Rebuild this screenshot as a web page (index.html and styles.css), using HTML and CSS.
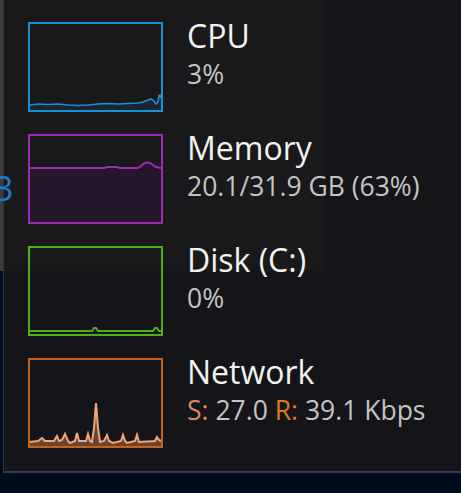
FILE: index.html
```html
<!DOCTYPE html>
<html lang="en">
<head>
<meta charset="utf-8">
<title>Performance</title>
<link rel="stylesheet" href="styles.css">
</head>
<body>
<div class="backdrop"></div>
<span class="stray">3</span>
<main class="panel">
  <ul class="list">
    <li class="item">
      <svg class="chart" width="135" height="90" viewBox="0 0 135 90">
        <path class="cpu-fill" d="M2,88 L2,83 L10,82 L20,82.5 L30,82 L40,83 L50,83.5 L60,83 L70,82 L80,81.5 L90,82 L100,81.5 L110,81 L115,80 L120,78 L123,77 L126,79 L128,82 L130,80 L131,74 L132,73 L133,76 L133,88 Z"/>
        <polyline class="cpu-line" points="2,83 10,82 20,82.5 30,82 40,83 50,83.5 60,83 70,82 80,81.5 90,82 100,81.5 110,81 115,80 120,78 123,77 126,79 128,82 130,80 131,74 132,73 133,76"/>
        <rect class="cpu-box" x="1" y="1" width="133" height="88"/>
      </svg>
      <div class="info">
        <div class="title">CPU</div>
        <div class="value">3%</div>
      </div>
    </li>
    <li class="item">
      <svg class="chart" width="135" height="90" viewBox="0 0 135 90">
        <path class="mem-fill" d="M2,88 L2,34 L76,34 L80,33 L88,33 L92,34 L110,34 L113,32 L116,29.5 L119,28.5 L122,29 L125,31 L128,33 L133,34 L133,88 Z"/>
        <polyline class="mem-line" points="2,34 76,34 80,33 88,33 92,34 110,34 113,32 116,29.5 119,28.5 122,29 125,31 128,33 133,34"/>
        <rect class="mem-box" x="1" y="1" width="133" height="88"/>
      </svg>
      <div class="info">
        <div class="title">Memory</div>
        <div class="value">20.1/31.9 GB (63%)</div>
      </div>
    </li>
    <li class="item">
      <svg class="chart" width="135" height="90" viewBox="0 0 135 90">
        <polyline class="disk-line" points="2,85 64,85 66,82 68,82 70,85 125,85 127,82 129,82 131,85 133,85"/>
        <rect class="disk-box" x="1" y="1" width="133" height="88"/>
      </svg>
      <div class="info">
        <div class="title">Disk (C:)</div>
        <div class="value">0%</div>
      </div>
    </li>
    <li class="item">
      <svg class="chart" width="135" height="90" viewBox="0 0 135 90">
        <path class="net-fill" d="M2,88 L2,84 L10,83 L14,80 L17,83 L26,83 L29,78 L31,83 L34,82 L37,76 L40,83 L42,85 L47,83 L49,75 L51,83 L58,83 L60,76 L62,83 L64,84 L66,70 L68,45 L70,70 L72,84 L76,83 L79,77 L81,83 L85,85 L93,83 L95,77 L97,83 L99,85 L107,83 L109,77 L111,84 L127,83 L129,79 L131,82 L133,83 L133,88 Z"/>
        <polyline class="net-line" points="2,84 10,83 14,80 17,83 26,83 29,78 31,83 34,82 37,76 40,83 42,85 47,83 49,75 51,83 58,83 60,76 62,83 64,84 66,70 68,45 70,70 72,84 76,83 79,77 81,83 85,85 93,83 95,77 97,83 99,85 107,83 109,77 111,84 127,83 129,79 131,82 133,83"/>
        <rect class="net-box" x="1" y="1" width="133" height="88"/>
      </svg>
      <div class="info">
        <div class="title">Network</div>
        <div class="value"><span class="send">S:</span> 27.0 <span class="recv">R:</span> 39.1 Kbps</div>
      </div>
    </li>
  </ul>
</main>
</body>
</html>
```
FILE: styles.css
```css
html, body {
  margin: 0;
  padding: 0;
}
body {
  width: 461px;
  height: 493px;
  overflow: hidden;
  background: #010b1e;
  font-family: "Open Sans", "Noto Sans", sans-serif;
  position: relative;
}
.backdrop {
  position: absolute;
  left: 0;
  top: 0;
  width: 325px;
  height: 271px;
  background: #3c3c3c;
}
.stray {
  position: absolute;
  left: -6px;
  top: 168px;
  font-size: 34px;
  line-height: 40px;
  color: #1a7ccc;
  z-index: 2;
}
.panel {
  position: relative;
  z-index: 1;
  box-sizing: border-box;
  margin-left: 3px;
  height: 473px;
  background: rgba(23, 23, 25, 0.92);
  border-left: 1px solid #303237;
  border-bottom: 2px solid #373c44;
  padding: 22px 0 0 24px;
}
.list {
  list-style: none;
  margin: 0;
  padding: 0;
  display: flex;
  flex-direction: column;
  gap: 22px;
}
.item {
  display: flex;
  align-items: flex-start;
}
.chart {
  display: block;
  flex: none;
}
.info {
  margin-left: 24px;
}
.title {
  font-size: 32px;
  line-height: 28px;
  color: #f2f2f2;
}
.value {
  font-size: 26.5px;
  line-height: 28px;
  padding-top: 10px;
  color: #c4c4c4;
}
.send { color: #d98b62; }
.recv { color: #dd7a1c; }

rect { fill: none; stroke-width: 2; }
.cpu-box { stroke: #1b8fd4; }
.cpu-line { fill: none; stroke: #1e8fd0; stroke-width: 1.6; }
.cpu-fill { fill: rgba(30, 143, 208, 0.12); }
.mem-box { stroke: #9b29b5; }
.mem-line { fill: none; stroke: #9b29b5; stroke-width: 2; }
.mem-fill { fill: #25162b; }
.disk-box { stroke: #4fae1b; }
.disk-line { fill: none; stroke: #4fae1b; stroke-width: 2; }
.net-box { stroke: #c2651c; }
.net-line { fill: none; stroke: #f0a878; stroke-width: 2; }
.net-fill { fill: rgba(232, 140, 80, 0.4); }
```
